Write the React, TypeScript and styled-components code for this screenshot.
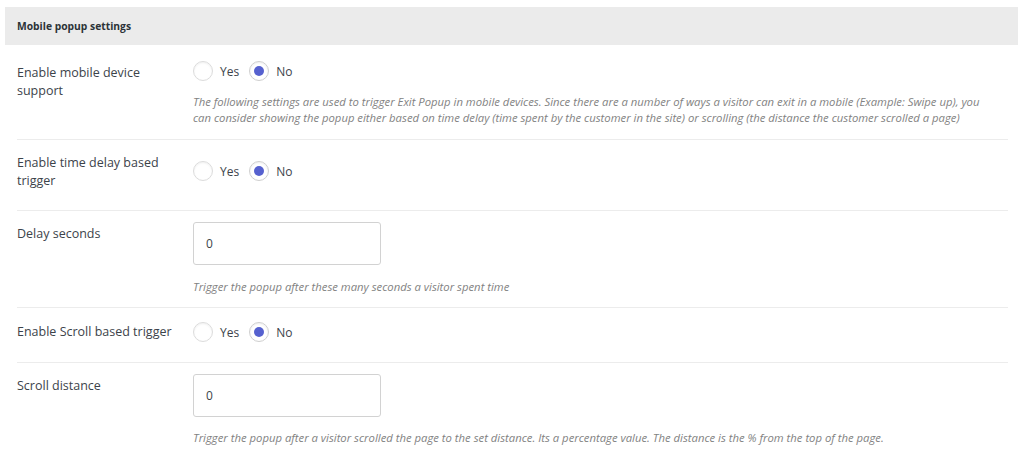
import React from "react";
import styled, { createGlobalStyle } from "styled-components";

const GlobalStyle = createGlobalStyle`
  body {
    margin: 0;
    background: #fff;
    font-family: "Open Sans", "Lato", sans-serif;
    color: #3c434a;
  }
`;

const Panel = styled.div`
  padding: 7px 6px 0 5px;
`;

const Header = styled.div`
  background: #ebebeb;
  height: 38px;
  display: flex;
  align-items: center;
  padding-left: 12px;
  font-size: 10.3px;
  font-weight: 700;
  color: #2c3338;
`;

const Rows = styled.div`
  padding: 0 10px 0 12px;
`;

const Row = styled.div<{ $pad: string }>`
  display: grid;
  grid-template-columns: 176px 1fr;
  padding: ${(p) => p.$pad};
  border-bottom: 1px solid #ececec;
  &:last-child {
    border-bottom: none;
  }
`;

const Label = styled.div<{ $top: number }>`
  font-size: 12.5px;
  line-height: 18px;
  color: #3c434a;
  padding-top: ${(p) => p.$top}px;
  padding-right: 10px;
`;

const Field = styled.div<{ $top?: number }>`
  display: flex;
  flex-direction: column;
  padding-top: ${(p) => p.$top ?? 0}px;
`;

const RadioGroup = styled.div`
  display: flex;
  align-items: center;
  height: 22px;
`;

const RadioOption = styled.label`
  display: flex;
  align-items: center;
  font-size: 12px;
  color: #3c434a;
  margin-right: 10px;
`;

const RadioCircle = styled.span<{ $checked: boolean }>`
  width: 20px;
  height: 20px;
  box-sizing: border-box;
  border-radius: 50%;
  border: 1px solid ${(p) => (p.$checked ? "#cfcfcf" : "#dcdcdc")};
  box-shadow: inset 0 1px 2px rgba(0, 0, 0, 0.06);
  background: #fff;
  margin-right: 7px;
  display: flex;
  align-items: center;
  justify-content: center;
  &::after {
    content: "";
    width: 10px;
    height: 10px;
    border-radius: 50%;
    background: ${(p) => (p.$checked ? "#5661cf" : "transparent")};
  }
`;

const Help = styled.p<{ $top: number }>`
  margin: ${(p) => p.$top}px 0 0;
  padding-right: 12px;
  font-size: 11.3px;
  line-height: 16px;
  font-style: italic;
  color: #828282;
`;

const Input = styled.input`
  width: 188px;
  height: 43px;
  box-sizing: border-box;
  border: 1px solid #d2d2d2;
  border-radius: 3px;
  padding: 0 12px;
  font-family: inherit;
  font-size: 12px;
  color: #3c434a;
  outline: none;
`;

const Radios = ({ value }: { value: "yes" | "no" }) => (
  <RadioGroup>
    <RadioOption>
      <RadioCircle $checked={value === "yes"} />
      Yes
    </RadioOption>
    <RadioOption>
      <RadioCircle $checked={value === "no"} />
      No
    </RadioOption>
  </RadioGroup>
);

export default function App() {
  return (
    <>
      <GlobalStyle />
      <Panel>
        <Header>Mobile popup settings</Header>
        <Rows>
          <Row $pad="15px 0 13px">
            <Label $top={4}>Enable mobile device support</Label>
            <Field>
              <Radios value="no" />
              <Help $top={12}>
                The following settings are used to trigger Exit Popup in mobile devices. Since there are a number of ways a visitor can exit in a mobile (Example: Swipe up), you can consider showing the popup either based on time delay (time spent by the customer in the site) or scrolling (the distance the customer scrolled a page)
              </Help>
            </Field>
          </Row>
          <Row $pad="14px 0 20px">
            <Label $top={0}>Enable time delay based trigger</Label>
            <Field $top={6}>
              <Radios value="no" />
            </Field>
          </Row>
          <Row $pad="11px 0 12px">
            <Label $top={3}>Delay seconds</Label>
            <Field>
              <Input defaultValue="0" />
              <Help $top={14}>Trigger the popup after these many seconds a visitor spent time</Help>
            </Field>
          </Row>
          <Row $pad="13px 0 19px">
            <Label $top={2}>Enable Scroll based trigger</Label>
            <Field>
              <Radios value="no" />
            </Field>
          </Row>
          <Row $pad="11px 0 4px">
            <Label $top={3}>Scroll distance</Label>
            <Field>
              <Input defaultValue="0" />
              <Help $top={13}>
                Trigger the popup after a visitor scrolled the page to the set distance. Its a percentage value. The distance is the % from the top of the page.
              </Help>
            </Field>
          </Row>
        </Rows>
      </Panel>
    </>
  );
}
